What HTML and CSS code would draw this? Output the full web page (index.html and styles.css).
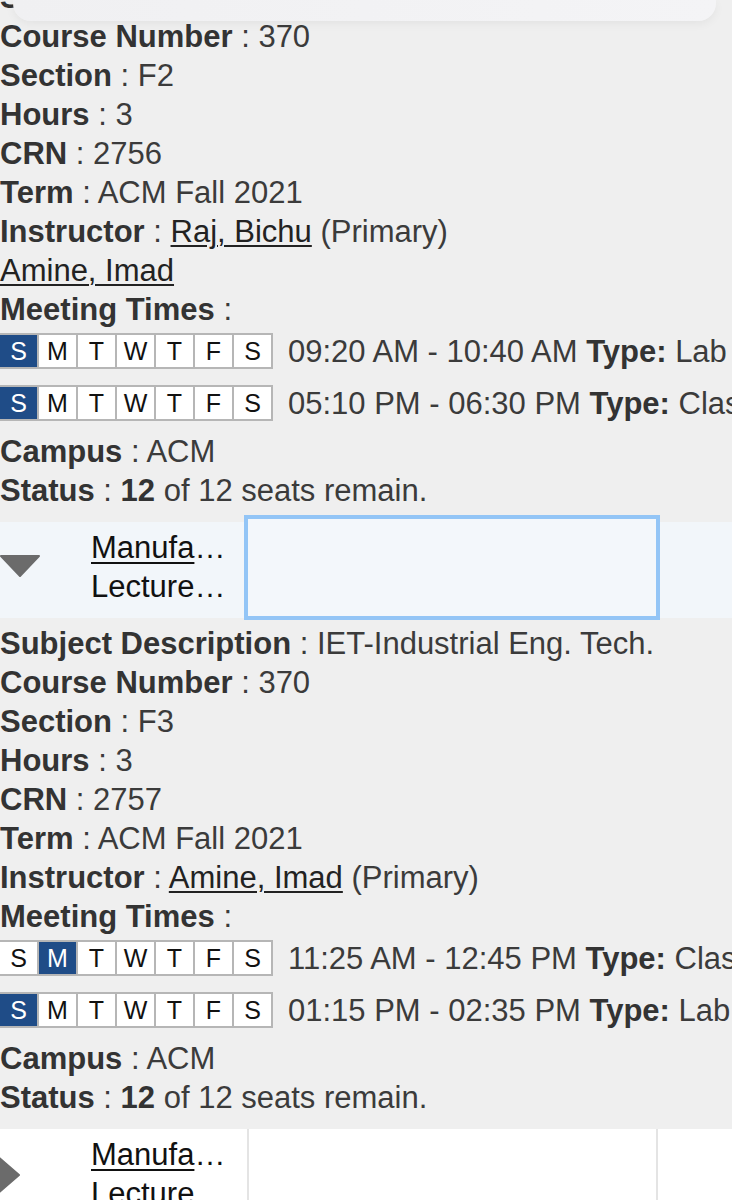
FILE: index.html
```html
<!DOCTYPE html>
<html lang="en">
<head>
<meta charset="utf-8">
<title>Course sections</title>
<link rel="stylesheet" href="styles.css">
</head>
<body>
<div class="sheet-edge"></div>
<main class="list">
  <section class="details first">
    <div class="line"><b>Subject Description</b> : IET-Industrial Eng. Tech.</div>
    <div class="line"><b>Course Number</b> : 370</div>
    <div class="line"><b>Section</b> : F2</div>
    <div class="line"><b>Hours</b> : 3</div>
    <div class="line"><b>CRN</b> : 2756</div>
    <div class="line"><b>Term</b> : ACM Fall 2021</div>
    <div class="line"><b>Instructor</b> : <a class="link" href="#">Raj, Bichu</a> (Primary)</div>
    <div class="line"><a class="link" href="#">Amine, Imad</a></div>
    <div class="line"><b>Meeting Times</b> :</div>
    <div class="meetings">
      <div class="meeting">
        <div class="days"><span class="day on">S</span><span class="day">M</span><span class="day">T</span><span class="day">W</span><span class="day">T</span><span class="day">F</span><span class="day">S</span></div>
        <span class="time">09:20 AM - 10:40 AM <b>Type:</b> Lab</span>
      </div>
      <div class="meeting">
        <div class="days"><span class="day on">S</span><span class="day">M</span><span class="day">T</span><span class="day">W</span><span class="day">T</span><span class="day">F</span><span class="day">S</span></div>
        <span class="time">05:10 PM - 06:30 PM <b>Type:</b> Class</span>
      </div>
    </div>
    <div class="line"><b>Campus</b> : ACM</div>
    <div class="line"><b>Status</b> : <b>12</b> of 12 seats remain.</div>
  </section>

  <div class="row open">
    <div class="toggle">
      <svg class="arrow-down" width="40" height="22" viewBox="0 0 40 22"><polygon points="1,1 39,1 20,21" fill="#6b6b6b" stroke="#6b6b6b" stroke-width="2" stroke-linejoin="round"/></svg>
    </div>
    <div class="names">
      <div><a class="title" href="#">Manufa</a>…</div>
      <div>Lecture…</div>
    </div>
    <div class="cell focus"></div>
  </div>

  <section class="details">
    <div class="line"><b>Subject Description</b> : IET-Industrial Eng. Tech.</div>
    <div class="line"><b>Course Number</b> : 370</div>
    <div class="line"><b>Section</b> : F3</div>
    <div class="line"><b>Hours</b> : 3</div>
    <div class="line"><b>CRN</b> : 2757</div>
    <div class="line"><b>Term</b> : ACM Fall 2021</div>
    <div class="line"><b>Instructor</b> : <a class="link" href="#">Amine, Imad</a> (Primary)</div>
    <div class="line"><b>Meeting Times</b> :</div>
    <div class="meetings">
      <div class="meeting">
        <div class="days"><span class="day">S</span><span class="day on">M</span><span class="day">T</span><span class="day">W</span><span class="day">T</span><span class="day">F</span><span class="day">S</span></div>
        <span class="time">11:25 AM - 12:45 PM <b>Type:</b> Class</span>
      </div>
      <div class="meeting">
        <div class="days"><span class="day on">S</span><span class="day">M</span><span class="day">T</span><span class="day">W</span><span class="day">T</span><span class="day">F</span><span class="day">S</span></div>
        <span class="time">01:15 PM - 02:35 PM <b>Type:</b> Lab</span>
      </div>
    </div>
    <div class="line"><b>Campus</b> : ACM</div>
    <div class="line"><b>Status</b> : <b>12</b> of 12 seats remain.</div>
  </section>

  <div class="row closed">
    <div class="toggle">
      <svg class="arrow-right" width="20" height="40" viewBox="0 0 20 40"><polygon points="-3,1 19,20 -3,39" fill="#6b6b6b" stroke="#6b6b6b" stroke-width="2" stroke-linejoin="round"/></svg>
    </div>
    <div class="names">
      <div><a class="title" href="#">Manufa</a>…</div>
      <div>Lecture…</div>
    </div>
    <div class="cell bordered"></div>
    <div class="cell rest"></div>
  </div>
</main>
</body>
</html>
```

FILE: styles.css
```css
html, body {
  margin: 0;
  padding: 0;
  overflow: hidden;
}

body {
  width: 732px;
  height: 1200px;
  background: #efefef;
  font-family: "Liberation Sans", Arial, sans-serif;
  font-size: 31px;
  line-height: 39px;
  color: #3b3b3b;
  position: relative;
}

.sheet-edge {
  position: absolute;
  top: 0;
  left: 13px;
  width: 703px;
  height: 21px;
  background: linear-gradient(90deg, #f0f0f2 0%, #f4f4f6 100%);
  border-bottom-left-radius: 18px;
  border-bottom-right-radius: 18px;
  box-shadow: 0 3px 10px rgba(0, 0, 0, 0.05);
  z-index: 2;
}

.list {
  display: flex;
  flex-direction: column;
}

.details {
  padding: 6px 0 12px 0;
  white-space: nowrap;
}

.details.first {
  margin-top: -28px;
}

.line {
  height: 39px;
  white-space: nowrap;
}

.line b,
.time b {
  font-weight: bold;
  color: #333;
}

.link {
  color: #222;
  text-decoration: underline;
  text-decoration-thickness: 2px;
  text-underline-offset: 3px;
}

.meetings {
  display: flex;
  flex-direction: column;
  gap: 16px;
  padding: 4px 0 11px 0;
}

.meeting {
  display: flex;
  align-items: center;
  height: 36px;
}

.days {
  display: flex;
  gap: 2px;
  height: 36px;
  box-sizing: border-box;
  border: 2px solid #b6b6b6;
  border-left: 0;
  background: #b6b6b6;
  flex: none;
}

.day {
  width: 37px;
  height: 32px;
  background: #ffffff;
  color: #111;
  font-size: 25px;
  line-height: 32px;
  text-align: center;
}

.day.on {
  background: #1f4c87;
  color: #ffffff;
}

.time {
  margin-left: 15px;
  white-space: nowrap;
  color: #3b3b3b;
}

.row {
  display: flex;
  align-items: flex-start;
  height: 96px;
  box-sizing: border-box;
  flex: none;
}

.row.open {
  background: #f2f6fa;
}

.row.closed {
  background: #ffffff;
  height: 120px;
}

.toggle {
  width: 91px;
  flex: none;
  display: flex;
}

.open .toggle {
  padding-top: 33px;
}

.closed .toggle {
  padding-top: 26px;
}

.toggle svg {
  display: block;
}

.names {
  width: 153px;
  flex: none;
  padding-top: 6px;
  color: #111;
  white-space: nowrap;
}

.title {
  color: #111;
  text-decoration: underline;
  text-decoration-thickness: 2px;
  text-underline-offset: 4px;
}

.cell.focus {
  width: 416px;
  height: 105px;
  margin-top: -7px;
  box-sizing: border-box;
  border: 4px solid #93c5f6;
  background: #f3f7fb;
  flex: none;
}

.cell.bordered {
  margin-left: 3px;
  width: 407px;
  height: 120px;
  border-left: 2px solid #e4e4e4;
  border-right: 2px solid #e4e4e4;
  flex: none;
}

.cell.rest {
  flex: 1;
  height: 120px;
}
```
